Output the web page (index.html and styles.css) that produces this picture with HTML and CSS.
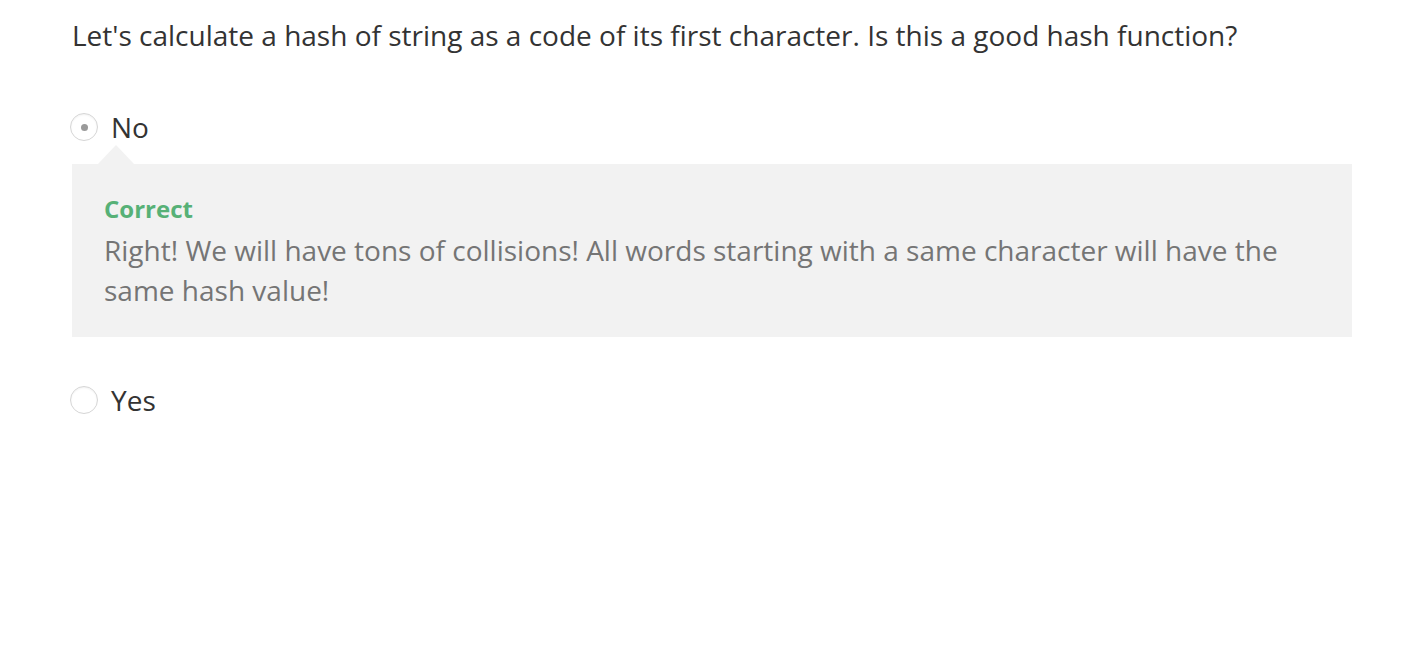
FILE: index.html
```html
<!DOCTYPE html>
<html>
<head>
<meta charset="utf-8">
<link rel="stylesheet" href="styles.css">
</head>
<body>
<div class="quiz">
  <p class="question">Let's calculate a hash of string as a code of its first character. Is this a good hash function?</p>
  <div class="options">
    <div class="option">
      <label class="choice">
        <span class="radio checked"><span class="dot"></span></span>
        <span class="label">No</span>
      </label>
      <div class="feedback">
        <div class="feedback-title">Correct</div>
        <div class="feedback-text">Right! We will have tons of collisions! All words starting with a same character will have the same hash value!</div>
      </div>
    </div>
    <div class="option">
      <label class="choice">
        <span class="radio"></span>
        <span class="label">Yes</span>
      </label>
    </div>
  </div>
</div>
</body>
</html>
```

FILE: styles.css
```css
html, body {
  margin: 0;
  padding: 0;
  background: #ffffff;
}
body {
  font-family: "Open Sans", "Liberation Sans", sans-serif;
  color: #333333;
}
.quiz {
  width: 1280px;
  padding: 15px 0 0 72px;
}
.question {
  margin: 0;
  font-size: 28px;
  line-height: 40px;
  color: #333333;
}
.options {
  margin-top: 52px;
  display: flex;
  flex-direction: column;
  gap: 43px;
}
.choice {
  display: flex;
  align-items: center;
  gap: 13px;
  height: 40px;
  margin-left: -2px;
}
.radio {
  box-sizing: border-box;
  width: 28px;
  height: 28px;
  border-radius: 50%;
  border: 1px solid #d6d6d6;
  box-shadow: inset 0 1px 2px rgba(0,0,0,0.06);
  display: flex;
  align-items: center;
  justify-content: center;
  background: #fff;
}
.dot {
  width: 7px;
  height: 7px;
  border-radius: 50%;
  background: #9a9a9a;
}
.label {
  font-size: 28px;
  line-height: 40px;
  color: #333333;
}
.feedback {
  position: relative;
  margin-top: 17px;
  background: #f2f2f2;
  padding: 29px 32px 27px 32px;
}
.feedback::before {
  content: "";
  position: absolute;
  top: -19px;
  left: 26px;
  width: 0;
  height: 0;
  border-left: 18px solid transparent;
  border-right: 18px solid transparent;
  border-bottom: 19px solid #f2f2f2;
}
.feedback-title {
  font-size: 24px;
  font-weight: 700;
  line-height: 32px;
  margin-bottom: 5px;
  color: #57b177;
}
.feedback-text {
  font-size: 28px;
  line-height: 40px;
  color: #757575;
}
```
